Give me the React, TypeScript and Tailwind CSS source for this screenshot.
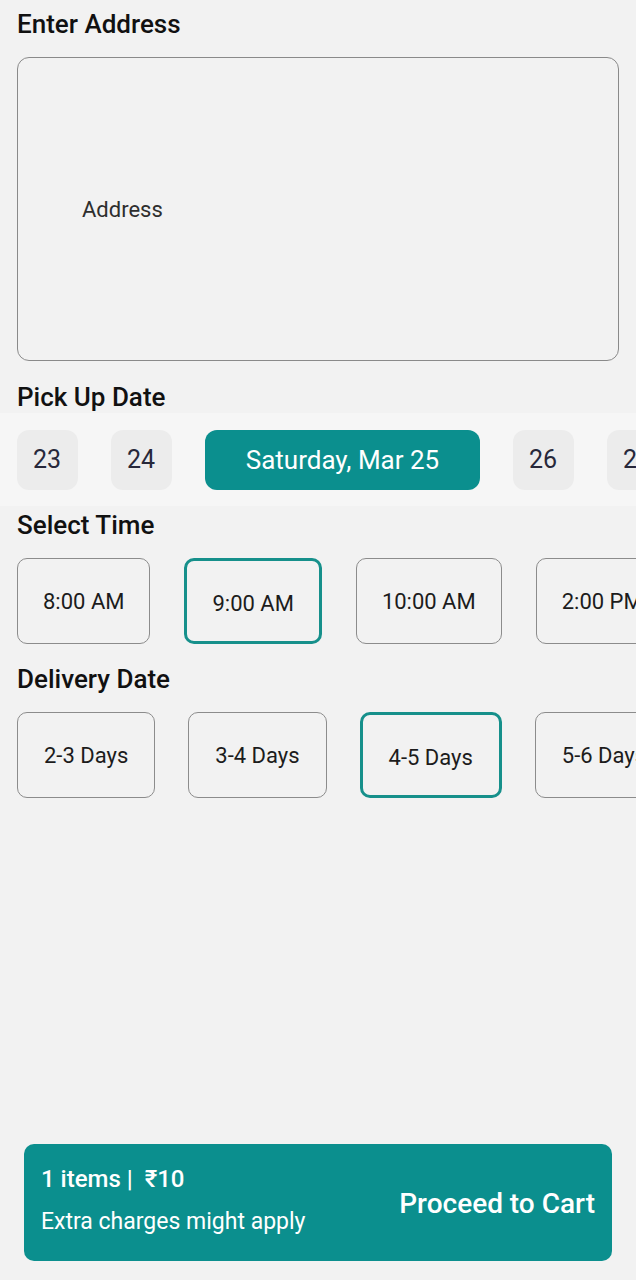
import React from 'react';

const pickupDates = ['23', '24', 'Saturday, Mar 25', '26', '27'];
const times = ['8:00 AM', '9:00 AM', '10:00 AM', '2:00 PM'];
const deliveries = ['2-3 Days', '3-4 Days', '4-5 Days', '5-6 Days'];

const SectionTitle: React.FC<{ children: React.ReactNode; className?: string }> = ({ children, className = '' }) => (
  <h2 className={`px-[17px] text-[26px] leading-[28px] font-medium text-[#111] ${className}`}>{children}</h2>
);

const OptionChip: React.FC<{ label: string; selected?: boolean; wide?: boolean }> = ({ label, selected, wide }) => (
  <div
    className={`shrink-0 h-[86px] flex items-center justify-center rounded-[10px] bg-[#f2f2f2] text-[22px] text-[#1c1c1c] ${
      wide ? 'px-[26px]' : 'px-[25px]'
    } ${selected ? 'border-[3px] border-[#16908b] pt-[4px]' : 'border border-[#8c8c8c]'}`}
  >
    {label}
  </div>
);

const App: React.FC = () => {
  return (
    <div className="min-h-screen flex flex-col bg-[#f2f2f2] font-['Roboto','Noto_Sans',sans-serif] overflow-hidden">
      <SectionTitle className="pt-[10px]">Enter Address</SectionTitle>

      <div className="mx-[17px] mt-[19px] h-[304px] rounded-[12px] border border-[#8a8a8a] flex items-center pl-[64px]">
        <span className="text-[22px] text-[#2e2e2e]">Address</span>
      </div>

      <SectionTitle className="mt-[22px]">Pick Up Date</SectionTitle>
      <div className="mt-[2px] bg-[#f6f6f6] pt-[17px] pb-[16px] pl-[17px] flex gap-[33px] overflow-hidden">
        {pickupDates.map((d, i) =>
          i === 2 ? (
            <div
              key={d}
              className="shrink-0 w-[275px] h-[60px] rounded-[12px] bg-[#0b8f8e] text-white text-[26px] flex items-center justify-center"
            >
              {d}
            </div>
          ) : (
            <div
              key={d}
              className="shrink-0 w-[61px] h-[60px] rounded-[12px] bg-[#ececec] text-[#27283a] text-[25px] flex items-center justify-start pl-[16px] overflow-hidden"
            >
              {d}
            </div>
          )
        )}
      </div>

      <SectionTitle className="mt-[5px]">Select Time</SectionTitle>
      <div className="mt-[19px] pl-[17px] flex gap-[34px] overflow-hidden">
        {times.map((t, i) => (
          <OptionChip key={t} label={t} selected={i === 1} />
        ))}
      </div>

      <SectionTitle className="mt-[21px]">Delivery Date</SectionTitle>
      <div className="mt-[19px] pl-[17px] flex gap-[33px] overflow-hidden">
        {deliveries.map((d, i) => (
          <OptionChip key={d} label={d} selected={i === 2} wide />
        ))}
      </div>

      <div className="mt-auto mx-[24px] mb-[19px] h-[117px] rounded-[10px] bg-[#0b8f8e] text-white flex items-center justify-between pl-[17px] pr-[17px]">
        <div className="flex flex-col mb-[4px]">
          <span className="text-[24px] leading-[28px] font-medium">1 items |&nbsp; ₹10</span>
          <span className="mt-[15px] text-[23px] leading-[28px]">Extra charges might apply</span>
        </div>
        <span className="mt-[3px] text-[28px] font-medium">Proceed to Cart</span>
      </div>
    </div>
  );
};

export default App;
